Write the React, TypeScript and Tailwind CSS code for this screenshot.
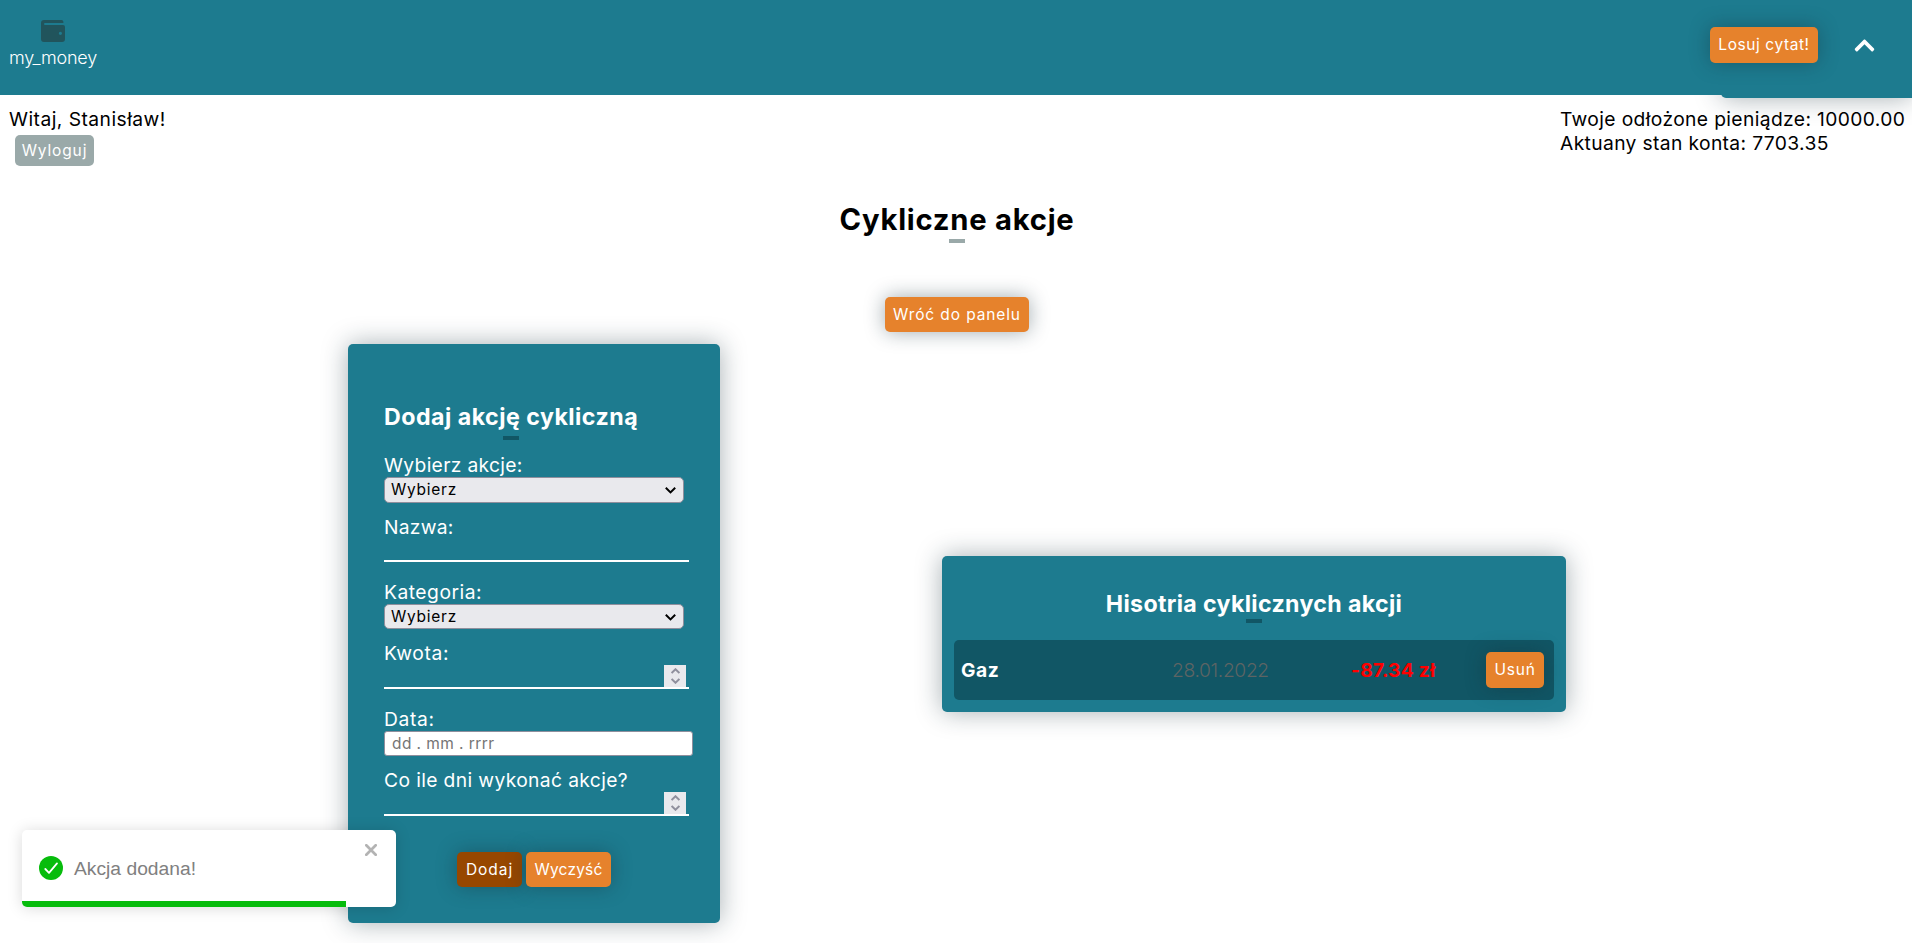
import type { ReactNode } from "react";
import { FaChevronUp } from "react-icons/fa";

const panelGlow = "shadow-[0_0_26px_rgba(20,45,55,0.38)]";
const buttonGlow = "shadow-[0_0_20px_rgba(20,45,55,0.4)]";

function Button({ className, children }: { className: string; children: ReactNode }) {
  return (
    <button
      type="button"
      className={`flex shrink-0 items-center justify-center whitespace-nowrap rounded-[5px] text-[15.5px] leading-5 text-white ${buttonGlow} ${className}`}
    >
      {children}
    </button>
  );
}

function Label({ className, children }: { className: string; children: ReactNode }) {
  return <div className={`h-6 whitespace-nowrap text-[19.25px] leading-6 ${className}`}>{children}</div>;
}

function SelectBox({ className }: { className: string }) {
  return (
    <div
      className={`flex w-[300px] items-center justify-between rounded-[5px] border border-[#8f8f9d] bg-[#e9e9ed] pl-1.5 pr-[7px] text-black ${className}`}
    >
      <span className="text-[15.5px] leading-5 tracking-[0.75px]">Wybierz</span>
      <svg className="mt-px" width="11" height="7" viewBox="0 0 11 7" fill="none" stroke="#000" strokeWidth="2">
        <path d="M0.8 0.8 5.5 5.4 10.2 0.8" />
      </svg>
    </div>
  );
}

function NumberField() {
  return (
    <div className="flex h-6 w-[305px] justify-end border-b-2 border-white pr-[3px]">
      <div className="flex h-[22px] w-[22px] flex-col items-center justify-center gap-1 bg-[#e9e9ed]">
        <svg width="9" height="6" viewBox="0 0 9 6" fill="none" stroke="#8f8f9d" strokeWidth="1.9">
          <path d="M0.6 5 4.5 1.2 8.4 5" />
        </svg>
        <svg width="9" height="6" viewBox="0 0 9 6" fill="none" stroke="#8f8f9d" strokeWidth="1.9">
          <path d="M0.6 1 4.5 4.8 8.4 1" />
        </svg>
      </div>
    </div>
  );
}

function Header() {
  return (
    <header className="relative h-[95px] bg-[#1d7b8f]">
      <div className={`absolute right-0 top-0 h-[98px] w-[191px] rounded-bl-[5px] bg-[#1d7b8f] ${panelGlow}`} />
      <div className="absolute bottom-0 right-0 h-[95px] w-full bg-[#1d7b8f]" />
      <div className="relative flex h-full justify-between">
        <div className="ml-[9px] flex w-[88px] flex-col items-center pt-5">
          <svg width="24" height="22" viewBox="0 0 24 22" fill="#21545c">
            <path
              fillRule="evenodd"
              d="M3 0H20.5A2 2 0 0 1 22.4 1.8V3H4A.8.8 0 0 0 4 5H22A2 2 0 0 1 24 7V19A3 3 0 0 1 21 22H3A3 3 0 0 1 0 19V3A3 3 0 0 1 3 0ZM19.4 11.7A1.6 1.6 0 1 0 19.4 14.9 1.6 1.6 0 1 0 19.4 11.7Z"
            />
          </svg>
          <div className="mt-1 whitespace-nowrap text-[18px] font-light leading-6 tracking-[-0.2px] text-white">
            my_money
          </div>
        </div>
        <div className="flex pt-[27px]">
          <Button className="h-9 w-[108px] bg-[#e6822c] tracking-[0.58px]">Losuj cytat!</Button>
          <FaChevronUp className="ml-[35px] mr-[36px] mt-[7px] text-[23px] text-white" />
        </div>
      </div>
    </header>
  );
}

function AddForm() {
  return (
    <section className={`h-[579px] w-[372px] rounded-[5px] bg-[#1d7b8f] pl-9 pt-[58px] text-white ${panelGlow}`}>
      <div className="w-[254px]">
        <h2 className="h-[30px] whitespace-nowrap text-[23.2px] font-bold leading-[30px] tracking-[0.48px]">
          Dodaj akcję cykliczną
        </h2>
        <div className="mx-auto mt-1 h-1 w-4 bg-[#115665]" />
      </div>
      <Label className="mt-[13px] tracking-[0.32px]">Wybierz akcje:</Label>
      <SelectBox className="h-[26px]" />
      <Label className="mt-3 tracking-[0.25px]">Nazwa:</Label>
      <div className="h-[23px] w-[305px] border-b-2 border-white" />
      <Label className="mt-[18px] tracking-[0.5px]">Kategoria:</Label>
      <SelectBox className="h-[25px]" />
      <Label className="mt-3 tracking-[0.6px]">Kwota:</Label>
      <NumberField />
      <Label className="mt-[18px] tracking-[0.65px]">Data:</Label>
      <div className="flex h-[25px] w-[309px] items-center rounded-[3px] border border-[#8f8f9d] bg-white pl-[7px] text-[15.5px] leading-5 tracking-[0.42px] text-[#757575]">
        dd . mm . rrrr
      </div>
      <Label className="mt-3 tracking-[0.37px]">Co ile dni wykonać akcje?</Label>
      <NumberField />
      <div className="ml-[73px] mt-9 flex gap-1">
        <Button className="h-[35px] w-[65px] bg-[#974700] tracking-[0.95px]">Dodaj</Button>
        <Button className="h-[35px] w-[85px] bg-[#e6822c] tracking-[0.2px]">Wyczyść</Button>
      </div>
    </section>
  );
}

function History() {
  return (
    <section className={`mt-[212px] h-[156px] w-[624px] rounded-[5px] bg-[#1d7b8f] px-3 pt-[33px] text-white ${panelGlow}`}>
      <h2 className="h-[30px] whitespace-nowrap text-center text-[23.2px] font-bold leading-[30px] tracking-[0.34px]">
        Hisotria cyklicznych akcji
      </h2>
      <div className="mx-auto h-1 w-4 bg-[#115665]" />
      <div className="mt-[17px] flex h-[60px] items-center rounded-[5px] bg-[#115665] pl-[7px] text-[19.25px]">
        <div className="w-[211px] font-bold tracking-[0.6px]">Gaz</div>
        <div className="w-[179px] font-light tracking-[-0.35px] text-[#5d6464]">28.01.2022</div>
        <div className="w-[135px] whitespace-nowrap font-bold tracking-[0.2px] text-[#ff0000]">-87.34 zł</div>
        <Button className="h-9 w-[58px] bg-[#e6822c] tracking-[0.8px]">Usuń</Button>
      </div>
    </section>
  );
}

function Toast() {
  return (
    <div className="absolute left-[22px] top-[830px] h-[77px] w-[374px] rounded-[5px] bg-white shadow-[0_1px_15px_rgba(0,0,0,0.15)]">
      <div className="flex h-full flex-col overflow-hidden rounded-[5px]">
        <div className="flex h-[71px] items-start pl-[17px] pr-[19px]">
          <svg className="mt-[26px]" width="24" height="24" viewBox="0 0 24 24">
            <circle cx="12" cy="12" r="12" fill="#07bc0c" />
            <path d="M6.3 13 10 16.8 18 7.4" fill="none" stroke="#fff" strokeWidth="1.8" strokeLinecap="round" strokeLinejoin="round" />
          </svg>
          <span className="ml-[11px] mt-[27px] grow font-['Liberation_Sans',sans-serif] text-[19.25px] leading-6 text-[#808080]">
            Akcja dodana!
          </span>
          <svg className="mt-[14px]" width="12" height="12" viewBox="0 0 12 12" stroke="#b3b3b3" strokeWidth="2.7" strokeLinecap="round">
            <path d="M1.3 1.3 10.7 10.7M10.7 1.3 1.3 10.7" />
          </svg>
        </div>
        <div className="h-1.5 w-[324px] bg-[#07bc0c]" />
      </div>
    </div>
  );
}

export default function App() {
  return (
    <div className="relative h-[943px] w-[1912px] overflow-hidden bg-white font-['Inter','Open_Sans',sans-serif] text-black">
      <Header />
      <div className="relative flex h-[107px] justify-between pt-3">
        <div className="pl-[9px]">
          <Label className="tracking-[0.46px]">Witaj, Stanisław!</Label>
          <div className="ml-1.5 mt-1 flex h-[31px] w-[79px] items-center justify-center rounded-[5px] bg-[#9aa9a9] text-[15.5px] tracking-[0.85px] text-white">
            Wyloguj
          </div>
        </div>
        <div className="w-[352px]">
          <Label className="tracking-[0.37px]">Twoje odłożone pieniądze: 10000.00</Label>
          <Label className="tracking-[0.36px]">Aktuany stan konta: 7703.35</Label>
        </div>
      </div>
      <h1 className="h-[37px] pl-0.5 text-center text-[29.2px] font-bold leading-9 tracking-[0.75px]">
        Cykliczne akcje
      </h1>
      <div className="mx-auto h-1 w-4 translate-x-px bg-[#9aa9a9]" />
      <Button className="mx-auto mt-[54px] h-[35px] w-[144px] translate-x-px bg-[#e6822c] tracking-[0.88px]">
        Wróć do panelu
      </Button>
      <main className="mt-3 flex items-start gap-[222px] pl-[348px]">
        <AddForm />
        <History />
      </main>
      <Toast />
    </div>
  );
}
